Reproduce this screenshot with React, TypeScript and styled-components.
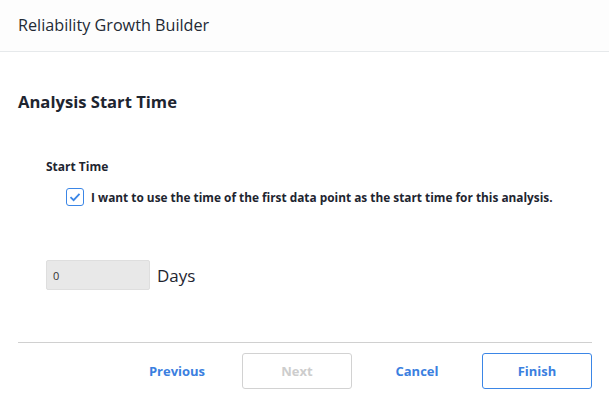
import React from "react";
import styled, { createGlobalStyle } from "styled-components";

const GlobalStyle = createGlobalStyle`
  html, body {
    margin: 0;
    padding: 0;
    background: #ffffff;
  }
  body {
    font-family: "Open Sans", "Noto Sans", sans-serif;
    color: #1e2530;
  }
`;

const Dialog = styled.div`
  width: 609px;
  height: 400px;
  display: flex;
  flex-direction: column;
  box-sizing: border-box;
  overflow: hidden;
`;

const Header = styled.div`
  height: 52px;
  box-sizing: border-box;
  border-bottom: 1px solid #e6e9eb;
  background: #fdfdfd;
  display: flex;
  align-items: center;
  padding: 0 18px 2px;
`;

const Title = styled.h1`
  margin: 0;
  font-size: 16.2px;
  font-weight: 400;
  color: #232a35;
`;

const Body = styled.div`
  flex: 1;
  display: flex;
  flex-direction: column;
  padding: 0 17px 0 18px;
`;

const SectionTitle = styled.h2`
  margin: 40px 0 0;
  font-size: 16.6px;
  font-weight: 700;
  line-height: 20px;
  color: #1e2530;
`;

const Field = styled.div`
  margin: 47px 0 0 28px;
  display: flex;
  flex-direction: column;
`;

const FieldLabel = styled.div`
  font-size: 12px;
  font-weight: 700;
  line-height: 15px;
`;

const CheckRow = styled.label`
  margin: 14px 0 0 20px;
  display: flex;
  align-items: center;
  gap: 7px;
  font-size: 11.85px;
  font-weight: 700;
  cursor: pointer;
`;

const CheckBox = styled.span`
  width: 18px;
  height: 18px;
  box-sizing: border-box;
  border: 1px solid #3b86e6;
  border-radius: 3px;
  display: flex;
  align-items: center;
  justify-content: center;
  background: #fff;
`;

const DaysRow = styled.div`
  margin: 54px 0 0 28px;
  display: flex;
  align-items: center;
  gap: 7px;
`;

const NumberInput = styled.div`
  width: 104px;
  height: 30px;
  box-sizing: border-box;
  background: #e8e8e8;
  border: 1px solid #dedede;
  border-radius: 2px;
  font-size: 11px;
  display: flex;
  align-items: center;
  padding-left: 6px;
  color: #333;
`;

const Unit = styled.span`
  font-size: 17px;
  color: #1e2530;
`;

const Footer = styled.div`
  margin-top: auto;
  border-top: 1px solid #d0d0d0;
  box-sizing: border-box;
  display: flex;
  align-items: center;
  justify-content: flex-end;
  gap: 10px;
  padding: 10px 0 11px;
`;

const Button = styled.button<{ $variant: "link" | "outline" | "disabled" }>`
  width: 110px;
  height: 36px;
  box-sizing: border-box;
  border-radius: 3px;
  font-family: inherit;
  font-size: 13px;
  font-weight: 700;
  background: #fff;
  cursor: pointer;
  border: 1px solid
    ${(p) =>
      p.$variant === "outline" ? "#3b86e6" : p.$variant === "disabled" ? "#d2d2d2" : "transparent"};
  color: ${(p) => (p.$variant === "disabled" ? "#cdcdcd" : "#3b7fe0")};
`;

const App: React.FC = () => {
  return (
    <>
      <GlobalStyle />
      <Dialog>
        <Header>
          <Title>Reliability Growth Builder</Title>
        </Header>
        <Body>
          <SectionTitle>Analysis Start Time</SectionTitle>
          <Field>
            <FieldLabel>Start Time</FieldLabel>
            <CheckRow>
              <CheckBox>
                <svg width="14" height="14" viewBox="0 0 14 14">
                  <path d="M2.5 7.2 L5.6 10.2 L11.5 3.8" fill="none" stroke="#3b86e6" strokeWidth="1.8" />
                </svg>
              </CheckBox>
              I want to use the time of the first data point as the start time for this analysis.
            </CheckRow>
          </Field>
          <DaysRow>
            <NumberInput>0</NumberInput>
            <Unit>Days</Unit>
          </DaysRow>
          <Footer>
            <Button $variant="link">Previous</Button>
            <Button $variant="disabled" disabled>Next</Button>
            <Button $variant="link">Cancel</Button>
            <Button $variant="outline">Finish</Button>
          </Footer>
        </Body>
      </Dialog>
    </>
  );
};

export default App;
